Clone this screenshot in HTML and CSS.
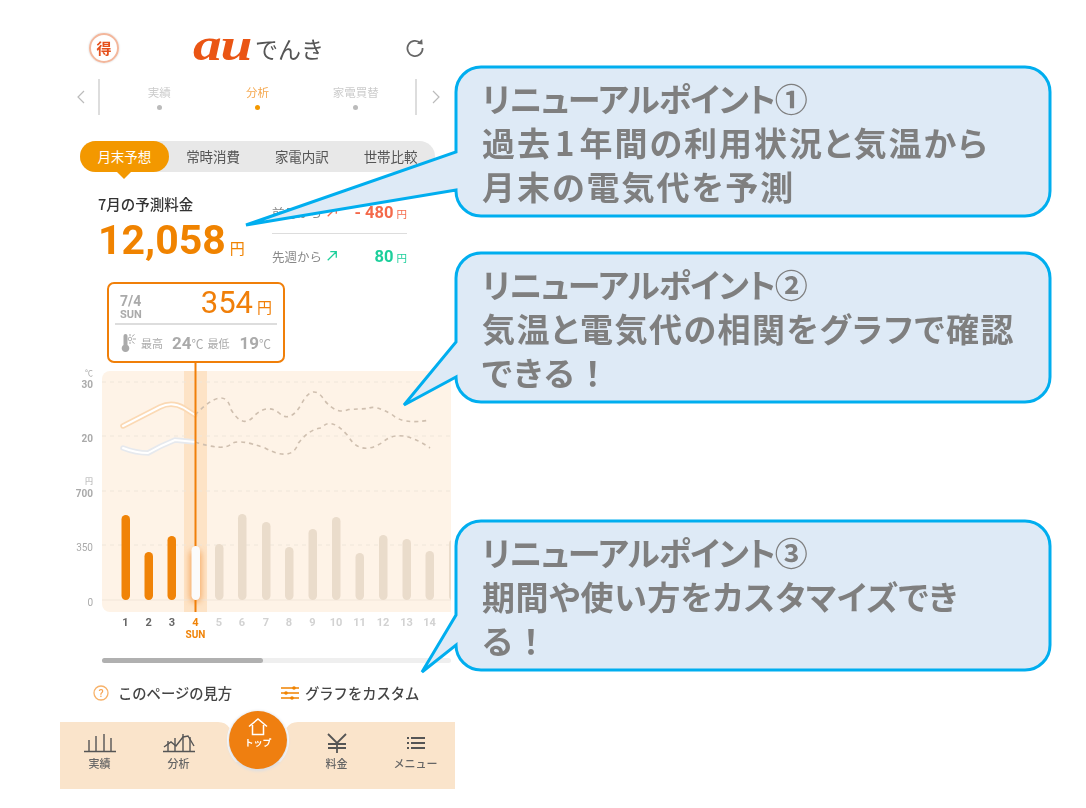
FILE: index.html
```html
<!DOCTYPE html>
<html lang="ja">
<head>
  <meta charset="UTF-8">
  <title>auでんき リニューアルポイント</title>
  <link rel="stylesheet" href="styles.css">
</head>
<body>
  <div class="page">
    <div class="phone">

      <header class="app-header">
        <div class="toku">得</div>
        <div class="logo"><span class="logo-au">au</span><span class="logo-name">でんき</span></div>
        <svg class="refresh" viewBox="0 0 20 20">
          <path d="M15.5 5.2A7.6 7.6 0 1 0 17.6 10" fill="none" stroke="#666" stroke-width="1.7"/>
          <path d="M12 5.8L17.6 6.6L17.2 1Z" fill="#666"/>
        </svg>
      </header>

      <nav class="subnav">
        <svg class="chevron" viewBox="0 0 8 14"><path d="M7 1L1 7L7 13" fill="none" stroke="#bbb" stroke-width="1.2"/></svg>
        <div class="subnav-items">
          <div class="subnav-item"><span>実績</span><i></i></div>
          <div class="subnav-item active"><span>分析</span><i></i></div>
          <div class="subnav-item"><span>家電買替</span><i></i></div>
        </div>
        <svg class="chevron" viewBox="0 0 8 14"><path d="M1 1L7 7L1 13" fill="none" stroke="#bbb" stroke-width="1.2"/></svg>
      </nav>

      <div class="segment">
        <div class="seg active">月末予想</div>
        <div class="seg">常時消費</div>
        <div class="seg">家電内訳</div>
        <div class="seg">世帯比較</div>
      </div>

      <section class="summary">
        <div class="forecast">
          <div class="forecast-title">7月の予測料金</div>
          <div class="forecast-price">12,058<small>円</small></div>
        </div>
        <div class="compare">
          <div class="compare-row">
            <span class="compare-label">前月から</span>
            <svg class="trend" viewBox="0 0 14 14"><path d="M2 12L12 2M5 2H12V9" fill="none" stroke="#f4694a" stroke-width="1.5"/></svg>
            <span class="compare-value down">- 480<small>円</small></span>
          </div>
          <div class="compare-row">
            <span class="compare-label">先週から</span>
            <svg class="trend" viewBox="0 0 14 14"><path d="M2 12L12 2M5 2H12V9" fill="none" stroke="#1ccf9b" stroke-width="1.5"/></svg>
            <span class="compare-value up">80<small>円</small></span>
          </div>
        </div>
      </section>

      <div class="day-card">
        <div class="day-top">
          <div class="day-date">7/4<small>SUN</small></div>
          <div class="day-price">354<small>円</small></div>
        </div>
        <div class="day-temps">
          <svg class="thermo" viewBox="0 0 16 20">
            <path d="M2.500 3a2 2 0 0 1 4 0v9a3.800 3.800 0 1 1-4 0Z" fill="#aaa"/>
            <circle cx="9" cy="6" r="1.800" fill="none" stroke="#aaa" stroke-width="0.900"/>
            <path d="M12 6H15M11 3.500L13.500 1.500M11 8.500L13.500 10.500M9 1V3M9 9V11" stroke="#aaa" stroke-width="1"/>
          </svg>
          <span class="temp-label">最高</span><b class="temp-high">24</b><span class="temp-unit">℃</span>
          <span class="temp-label">最低</span><b class="temp-low">19</b><span class="temp-unit">℃</span>
        </div>
      </div>

      <svg class="chart" viewBox="60 363 395 285">
        <path class="plot-bg" d="M110 371H451V612H110A8 8 0 0 1 102 604V379A8 8 0 0 1 110 371Z"/>
        <rect class="plot-hl" x="184" y="371" width="23" height="241"/>

        <path class="grid" d="M102 382H451M102 436H451M102 491H451M102 545H451"/>
        <path class="grid-base" d="M102 600H451"/>

        <text class="unit" x="93" y="376">℃</text>
        <text class="tick" x="93" y="388">30</text>
        <text class="tick" x="93" y="442">20</text>
        <text class="unit" x="93" y="484">円</text>
        <text class="tick" x="93" y="497">700</text>
        <text class="tick light" x="93" y="551">350</text>
        <text class="tick light" x="93" y="606">0</text>

        <path class="temp-past high" d="M123 426L160 407Q172 401 184 408L195 415"/>
        <path class="temp-past-in" d="M123 426L160 407Q172 401 184 408L195 415"/>
        <path class="temp-past low" d="M123 448Q136 453 148 453Q160 446 175 440L195 442"/>
        <path class="temp-past-in" d="M123 448Q136 453 148 453Q160 446 175 440L195 442"/>
        <path class="temp-future" d="M195 415Q225 384 231 409.500Q243 430 255 415Q267 404 278.500 412.500Q290 424 301.500 404Q313 381.500 325 401Q337 415 348.500 409.500Q360 409 368.500 408.500Q374 404.500 392 414.500Q403 425 430 420"/>
        <path class="temp-future" d="M195 442Q223 451 230.500 444.500Q238 438 265 448Q292 462.500 298.500 443Q310 428.500 321.500 428Q331 416 348 436Q360.500 457 383 442Q399.500 427 430 448"/>

        <g class="bars-past">
          <rect x="121.500" y="515" width="8.500" height="85" rx="4.200"/>
          <rect x="144.500" y="552" width="8.500" height="48" rx="4.200"/>
          <rect x="167.500" y="536" width="8.500" height="64" rx="4.200"/>
        </g>
        <g class="bars-future">
          <rect x="215" y="544" width="8.500" height="56" rx="4.200"/>
          <rect x="238" y="514" width="8.500" height="86" rx="4.200"/>
          <rect x="262" y="522" width="8.500" height="78" rx="4.200"/>
          <rect x="285" y="547" width="8.500" height="53" rx="4.200"/>
          <rect x="308.500" y="529" width="8.500" height="71" rx="4.200"/>
          <rect x="332" y="517" width="8.500" height="83" rx="4.200"/>
          <rect x="355.500" y="553" width="8.500" height="47" rx="4.200"/>
          <rect x="379" y="535" width="8.500" height="65" rx="4.200"/>
          <rect x="402.500" y="539" width="8.500" height="61" rx="4.200"/>
          <rect x="425.500" y="551" width="8.500" height="49" rx="4.200"/>
          <path d="M451 540A4 4 0 0 0 449 544V596A4 4 0 0 0 451 600Z"/>
        </g>
        <rect class="bar-glow" x="190" y="550" width="11" height="52" rx="5"/>
        <line class="day-line" x1="195.500" y1="363" x2="195.500" y2="612"/>
        <rect class="bar-now" x="191.500" y="546" width="8.500" height="54" rx="4.200"/>

        <g class="days">
          <text class="done" x="125.500" y="626">1</text>
          <text class="done" x="148.700" y="626">2</text>
          <text class="done" x="172" y="626">3</text>
          <text class="today" x="195.500" y="626">4</text>
          <text x="219" y="626">5</text>
          <text x="242" y="626">6</text>
          <text x="266" y="626">7</text>
          <text x="289" y="626">8</text>
          <text x="312.500" y="626">9</text>
          <text x="336" y="626">10</text>
          <text x="359.500" y="626">11</text>
          <text x="383" y="626">12</text>
          <text x="406.500" y="626">13</text>
          <text x="429.500" y="626">14</text>
        </g>
        <text class="today-sun" x="195.500" y="638">SUN</text>
      </svg>

      <div class="scrollbar"><div class="scroll-thumb"></div></div>

      <div class="links">
        <div class="link help">
          <svg class="link-icon" viewBox="0 0 16 16">
            <circle cx="8" cy="8" r="7" fill="none" stroke="#f7b26a" stroke-width="1.300"/>
            <text class="help-mark" x="8" y="11.500">?</text>
          </svg>
          このページの見方
        </div>
        <div class="link custom">
          <svg class="link-icon wide" viewBox="0 0 18 16">
            <path d="M0 3H18M0 8H18M0 13H18" stroke="#f08300" stroke-width="1.300"/>
            <circle cx="13" cy="3" r="1.800" fill="#f08300"/>
            <circle cx="5" cy="8" r="1.800" fill="#f08300"/>
            <circle cx="11" cy="13" r="1.800" fill="#f08300"/>
          </svg>
          グラフをカスタム
        </div>
      </div>

      <nav class="tabbar">
        <div class="tab">
          <svg class="tab-icon" viewBox="0 0 34 20">
            <path d="M1 18.500H33M6 18V7M13 18V3M21 18V1M28 18V5" fill="none" stroke="#555" stroke-width="1.400"/>
          </svg>
          実績
        </div>
        <div class="tab">
          <svg class="tab-icon" viewBox="0 0 34 20">
            <path d="M1 18.500H33M6 18V8M13 18V5M21 18V1M28 18V4" fill="none" stroke="#555" stroke-width="1.400"/>
            <path d="M2 14L9 9L14 13L21 4L26 3L32 13" fill="none" stroke="#555" stroke-width="1.400"/>
          </svg>
          分析
        </div>
        <div class="tab tab-home">
          <svg class="scoop" viewBox="0 0 80 40"><path d="M0 0Q8 0 11.500 6A31 31 0 1 0 68.500 6Q72 0 80 0Z" fill="#fff"/></svg>
          <div class="home-btn">
            <svg class="home-icon" viewBox="0 0 20 18">
              <path d="M1 8.500L10 1L19 8.500M4.500 7V16.500H15.500V7" fill="none" stroke="#fff" stroke-width="1.500"/>
            </svg>
            トップ
          </div>
        </div>
        <div class="tab">
          <svg class="tab-icon" viewBox="0 0 34 20">
            <path d="M8 1L17 10L26 1M17 10V20M8 11H26M8 15H26" fill="none" stroke="#555" stroke-width="1.800"/>
          </svg>
          料金
        </div>
        <div class="tab">
          <svg class="tab-icon" viewBox="0 0 34 20">
            <path d="M12 5H26M12 10H26M12 15H26" stroke="#555" stroke-width="1.800"/>
            <path d="M8 5H10M8 10H10M8 15H10" stroke="#555" stroke-width="1.800"/>
          </svg>
          メニュー
        </div>
      </nav>
    </div>

    <div class="callout callout-1">
      <svg class="callout-shape" viewBox="0 0 594 149">
        <path d="M25 0H569A25 25 0 0 1 594 25V124A25 25 0 0 1 569 149H25A25 25 0 0 1 0 124V123L-210 158L0 85V25A25 25 0 0 1 25 0Z"/>
      </svg>
      <p><span class="kana">リニューアルポイント</span>①<br>過去<span class="num">1</span>年間の利用状況と気温から<br>月末の電気代を予測</p>
    </div>
    <div class="callout callout-2">
      <svg class="callout-shape" viewBox="0 0 594 149">
        <path d="M25 0H569A25 25 0 0 1 594 25V124A25 25 0 0 1 569 149H25A25 25 0 0 1 0 124L-52 152L0 89V25A25 25 0 0 1 25 0Z"/>
      </svg>
      <p><span class="kana">リニューアルポイント</span>②<br><span class="snug">気温と電気代の相関をグラフで確認</span><br>できる<span class="bang">！</span></p>
    </div>
    <div class="callout callout-3">
      <svg class="callout-shape" viewBox="0 0 594 149">
        <path d="M25 0H569A25 25 0 0 1 594 25V124A25 25 0 0 1 569 149H25A25 25 0 0 1 0 124L-34 151L0 94V25A25 25 0 0 1 25 0Z"/>
      </svg>
      <p><span class="kana">リニューアルポイント</span>③<br><span class="tight">期間や使い方をカスタマイズでき</span><br>る<span class="bang">！</span></p>
    </div>
  </div>
</body>
</html>
```

FILE: styles.css
```css
* {
  box-sizing: border-box;
}

body {
  margin: 0;
  background-color: #fff;
  font-family: "Noto Sans CJK JP", "Noto Sans", sans-serif;
  color: #444;
}

.page {
  position: relative;
  width: 1086px;
  height: 808px;
  overflow: hidden;
  filter: blur(0.4px);
}

.phone {
  width: 395px;
  margin-left: 60px;
  padding-top: 28px;
}

/* header */
.app-header {
  display: flex;
  align-items: center;
  height: 40px;
  padding-left: 29px;
  padding-right: 30px;
}

.toku {
  width: 30px;
  height: 30px;
  border: 2px solid #f3b79c;
  border-radius: 50%;
  color: #e5501c;
  font-size: 15px;
  font-weight: 700;
  line-height: 26px;
  text-align: center;
  box-shadow: 0 0 2px #ccc;
}

.logo {
  display: flex;
  align-items: center;
  margin-left: 74px;
  flex: 1;
}

.logo-au {
  font-family: "Liberation Serif", serif;
  font-size: 47px;
  font-style: italic;
  font-weight: 700;
  line-height: 40px;
  color: #ea5514;
  margin-top: -8px;
  letter-spacing: -1px;
  width: 62px;
  transform: scaleX(1.22);
  transform-origin: left center;
}

.logo-name {
  font-size: 23px;
  color: #555;
  line-height: 40px;
}

.refresh {
  width: 20px;
  height: 20px;
}

/* analysis sub navigation */
.subnav {
  display: flex;
  align-items: center;
  height: 36px;
  margin-top: 11px;
  padding-left: 17px;
  padding-right: 15px;
}

.chevron {
  width: 8px;
  height: 14px;
  flex: none;
}

.subnav-items {
  flex: 1;
  display: flex;
  justify-content: space-around;
  height: 36px;
  margin: 0 15px 0 13px;
  padding: 0 10px;
  border-left: 2px solid #ddd;
  border-right: 2px solid #ddd;
}

.subnav-item {
  width: 90px;
  display: flex;
  flex-direction: column;
  align-items: center;
  gap: 5px;
  font-size: 11.500px;
  line-height: 16px;
  padding-top: 5px;
  color: #ccc;
}

.subnav-item i {
  width: 5px;
  height: 5px;
  border-radius: 50%;
  background-color: #bbb;
}

.subnav-item.active {
  color: #f5a74d;
}

.subnav-item.active i {
  background-color: #f39800;
}

/* segmented control */
.segment {
  display: flex;
  height: 31px;
  width: 355px;
  margin-left: 20px;
  margin-top: 26px;
  border-radius: 16px;
  background-color: #e8e8e8;
}

.seg {
  position: relative;
  width: 89px;
  font-size: 13.500px;
  line-height: 31px;
  text-align: center;
  color: #555;
}

.seg.active {
  background-color: #f39800;
  border-radius: 16px;
  color: #fff;
}

.seg.active::after {
  content: "";
  position: absolute;
  left: 36px;
  top: 30px;
  border-left: 8px solid transparent;
  border-right: 8px solid transparent;
  border-top: 8px solid #f39800;
}

/* monthly forecast */
.summary {
  display: flex;
  height: 90px;
  padding-left: 38px;
  margin-top: 18px;
}

.forecast {
  width: 174px;
}

.forecast-title {
  font-size: 14.500px;
  font-weight: 500;
  line-height: 18px;
  margin-top: 5px;
  color: #333;
}

.forecast-price {
  font-family: Roboto, sans-serif;
  font-size: 41px;
  font-weight: 700;
  line-height: 46px;
  margin-top: 4px;
  color: #f08300;
  white-space: nowrap;
}

.forecast-price small {
  font-family: "Noto Sans CJK JP", sans-serif;
  font-size: 15px;
  font-weight: 400;
  margin-left: 4px;
}

.compare {
  width: 135px;
  padding-top: 11px;
}

.compare-row {
  display: flex;
  align-items: center;
  height: 22px;
}

.compare-row + .compare-row {
  margin-top: 22px;
  position: relative;
}

.compare-row + .compare-row::before {
  content: "";
  position: absolute;
  left: 0;
  right: 0;
  top: -12px;
  height: 1px;
  background-color: #ddd;
}

.compare-label {
  font-size: 12.500px;
  color: #888;
}

.trend {
  width: 12px;
  height: 12px;
  margin-left: 4px;
}

.compare-value {
  flex: 1;
  font-family: Roboto, sans-serif;
  font-size: 16.500px;
  font-weight: 700;
  text-align: right;
}

.compare-value small {
  font-family: "Noto Sans CJK JP", sans-serif;
  font-size: 10.500px;
  font-weight: 400;
  margin-left: 3px;
}

.compare-value.down {
  color: #f4694a;
}

.compare-value.up {
  color: #1ccf9b;
}

/* selected day card */
.day-card {
  width: 178px;
  height: 81px;
  margin-left: 47px;
  margin-top: 2px;
  padding: 0 6px;
  border: 2px solid #f07f09;
  border-radius: 7px;
  background-color: #fff;
}

.day-top {
  display: flex;
  justify-content: space-between;
  height: 41px;
  padding: 0 5px;
  border-bottom: 2px solid #ddd;
}

.day-date {
  font-family: Roboto, sans-serif;
  font-size: 14px;
  font-weight: 700;
  line-height: 16px;
  padding-top: 9px;
  color: #aaa;
}

.day-date small {
  display: block;
  font-size: 11px;
  line-height: 12px;
}

.day-price {
  font-family: Roboto, sans-serif;
  font-size: 31px;
  line-height: 38px;
  color: #f07f09;
}

.day-price small {
  font-family: "Noto Sans CJK JP", sans-serif;
  font-size: 15px;
  margin-left: 4px;
}

.day-temps {
  display: flex;
  align-items: center;
  height: 36px;
  padding-left: 6px;
  color: #aaa;
}

.thermo {
  width: 16px;
  height: 20px;
  margin-right: 4px;
}

.temp-label {
  font-size: 11px;
}

.temp-high,
.temp-low {
  font-family: Roboto, sans-serif;
  font-size: 17px;
  margin-left: 9px;
}

.temp-low {
  margin-left: 10px;
}

.temp-unit {
  font-size: 12px;
  margin-right: 4px;
}

/* chart */
.chart {
  display: block;
  width: 395px;
  height: 285px;
}

.plot-bg {
  fill: #fef3e7;
}

.plot-hl {
  fill: #fde3c6;
}

.grid {
  fill: none;
  stroke: #efe6da;
  stroke-dasharray: 4 4;
}

.grid-base {
  fill: none;
  stroke: #f1e6d9;
}

.unit {
  font-size: 8px;
  fill: #aaa;
  text-anchor: end;
}

.tick {
  font-family: Roboto, sans-serif;
  font-size: 10px;
  font-weight: 700;
  fill: #aaa;
  text-anchor: end;
}

.tick.light {
  font-weight: 400;
}

.temp-past {
  fill: none;
  stroke-width: 5.500;
  stroke-linecap: round;
}

.temp-past.high {
  stroke: #fbd9b4;
}

.temp-past.low {
  stroke: #e6e9ee;
}

.temp-past-in {
  fill: none;
  stroke: #fff;
  stroke-width: 2;
  stroke-linecap: round;
}

.temp-future {
  fill: none;
  stroke: #cfbfaf;
  stroke-width: 1.600;
  stroke-dasharray: 4 4;
}

.bars-past rect {
  fill: #f08307;
}

.bars-future rect,
.bars-future path {
  fill: #eadccb;
}

.bar-glow {
  fill: #f6a65c;
  filter: blur(3px);
}

.bar-now {
  fill: #fbfbfb;
}

.day-line {
  stroke: #f07f09;
  stroke-width: 2;
}

.days text {
  font-family: Roboto, sans-serif;
  font-size: 11px;
  font-weight: 700;
  fill: #d2d2d2;
  text-anchor: middle;
}

.days .done {
  fill: #666;
}

.days .today {
  fill: #f08307;
}

.today-sun {
  font-family: Roboto, sans-serif;
  font-size: 10px;
  font-weight: 700;
  fill: #f08307;
  text-anchor: middle;
}

/* scrollbar + links */
.scrollbar {
  width: 349px;
  height: 5px;
  margin-left: 42px;
  margin-top: 10px;
  border-radius: 3px;
  background-color: #efefef;
}

.scroll-thumb {
  width: 161px;
  height: 5px;
  border-radius: 3px;
  background-color: #b0b0b0;
}

.links {
  display: flex;
  height: 20px;
  margin-top: 20px;
  padding-left: 33px;
}

.link {
  display: flex;
  align-items: center;
  font-size: 14.300px;
  font-weight: 500;
  line-height: 20px;
  color: #444;
}

.help {
  width: 188px;
}

.link-icon {
  width: 16px;
  height: 16px;
  margin-right: 9px;
}

.link-icon.wide {
  width: 18px;
  margin-right: 6px;
}

.help-mark {
  font-family: Roboto, sans-serif;
  font-size: 10.500px;
  font-weight: 500;
  fill: #f7a350;
  text-anchor: middle;
}

/* tab bar */
.tabbar {
  display: grid;
  grid-template-columns: repeat(5, 1fr);
  height: 67px;
  margin-top: 19px;
  background-color: #fae4cb;
}

.tab {
  position: relative;
  display: flex;
  flex-direction: column;
  align-items: center;
  padding-top: 11px;
  font-size: 11px;
  font-weight: 500;
  line-height: 14px;
  color: #666;
}

.tab-icon {
  width: 34px;
  height: 20px;
  margin-bottom: 3px;
}

.scoop {
  position: absolute;
  left: 0;
  top: 0;
  width: 80px;
  height: 40px;
}

.home-btn {
  position: absolute;
  left: 11px;
  top: -11px;
  width: 58px;
  height: 58px;
  padding-top: 7px;
  border-radius: 50%;
  background-color: #ef7f10;
  box-shadow: 0 1px 3px 1px #d9dee6;
  display: flex;
  flex-direction: column;
  align-items: center;
  font-size: 9px;
  font-weight: 700;
  line-height: 13px;
  color: #fff;
}

.home-icon {
  width: 20px;
  height: 18px;
}

/* callouts */
.callout {
  position: absolute;
  left: 456px;
  width: 594px;
  height: 149px;
}

.callout-1 {
  top: 67px;
}

.callout-2 {
  top: 253px;
}

.callout-3 {
  top: 521px;
}

.callout-shape {
  position: absolute;
  left: 0;
  top: 0;
  width: 594px;
  height: 149px;
  overflow: visible;
}

.callout-shape path {
  fill: #deeaf6;
  stroke: #00aeef;
  stroke-width: 3;
}

.callout p {
  position: relative;
  margin: 0;
  padding: 9px 0 0 26px;
  font-size: 33px;
  font-weight: 700;
  line-height: 44px;
  letter-spacing: 2px;
  color: #7f7f7f;
  white-space: nowrap;
  font-feature-settings: "palt";
}

.kana {
  letter-spacing: -0.900px;
}

.snug {
  letter-spacing: 1.500px;
}

.tight {
  letter-spacing: 0.500px;
}

.bang {
  font-feature-settings: normal;
}

.num {
  margin: 0 3px;
}
```
